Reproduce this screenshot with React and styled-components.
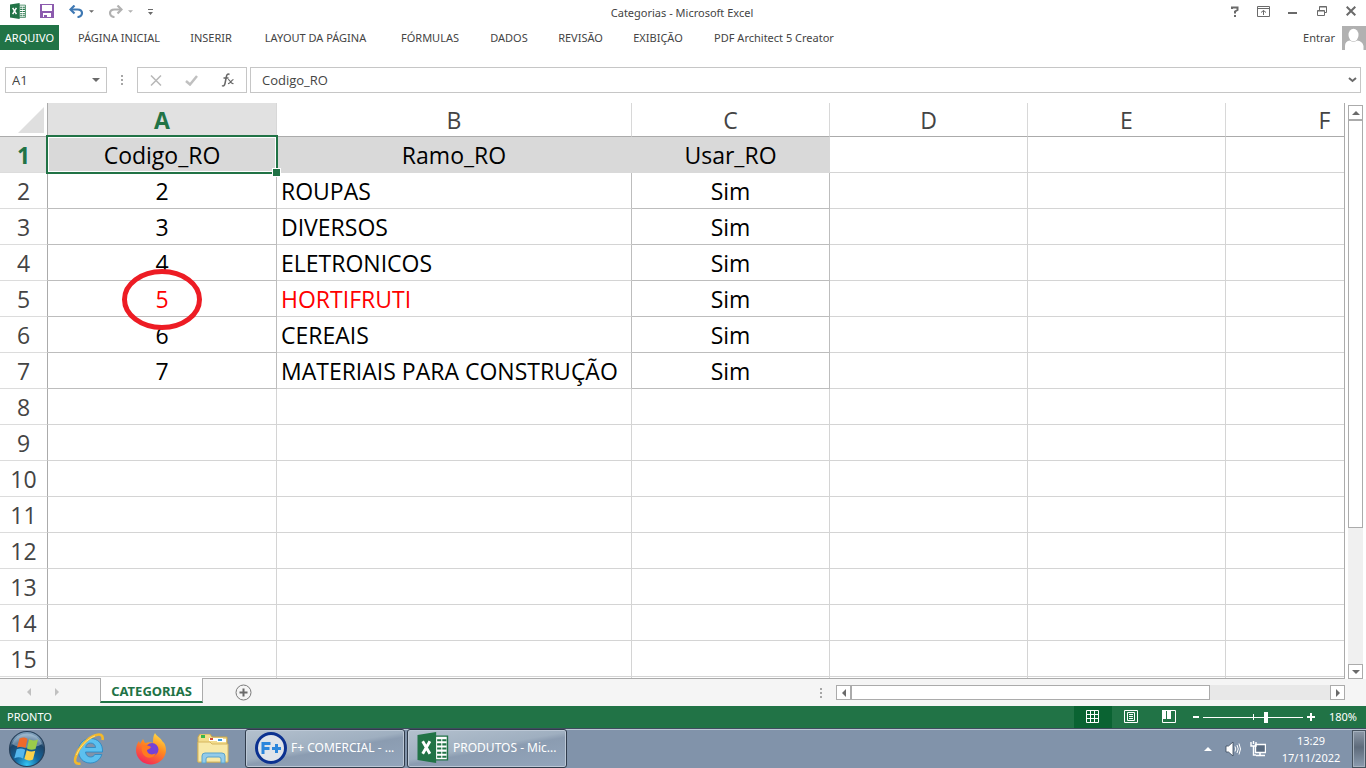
import styled, { createGlobalStyle, css } from "styled-components";

const GlobalStyle = createGlobalStyle`
  * {
    box-sizing: border-box;
  }
  body {
    margin: 0;
    background: #ffffff;
    color: #444444;
    font-family: "Noto Sans", "Open Sans", sans-serif;
    font-size: 11px;
  }
  button,
  input {
    margin: 0;
    padding: 0;
    border: 0;
    background: none;
    color: inherit;
    font: inherit;
  }
  svg {
    display: block;
    flex: none;
  }
`;

const Window = styled.div`
  display: flex;
  flex-direction: column;
  height: 100vh;
  overflow: hidden;
`;

const TitleBar = styled.header`
  display: grid;
  grid-template-columns: 1fr auto 1fr;
  align-items: center;
  flex: none;
  height: 25px;
`;

const QuickAccess = styled.div`
  display: flex;
  align-items: center;
  height: 22px;
  padding-left: 10px;
  align-self: start;
`;

const QuickButton = styled.button`
  display: flex;
  align-items: center;
  gap: 5px;
  margin-right: ${({ $gap }) => $gap}px;
`;

const Title = styled.div`
  padding-right: 2px;
  line-height: 16px;
`;

const WindowButtons = styled.div`
  display: flex;
  justify-content: flex-end;
  align-self: start;
  padding-right: 1px;
`;

const WindowButton = styled.button`
  display: flex;
  align-items: center;
  justify-content: center;
  width: 29px;
  height: 22px;
`;

const Ribbon = styled.nav`
  display: flex;
  flex: none;
  height: 25px;
`;

const RibbonTab = styled.button`
  width: ${({ $width }) => $width}px;
  line-height: 25px;
  white-space: nowrap;
`;

const FileTab = styled(RibbonTab)`
  margin-right: 3px;
  background: #217346;
  color: #ffffff;
`;

const SignIn = styled.button`
  display: flex;
  align-items: center;
  gap: 7px;
  margin-left: auto;
`;

const FormulaBar = styled.div`
  display: flex;
  align-items: center;
  flex: none;
  height: 26px;
  margin: 17px 5px 10px;
`;

const Box = styled.div`
  display: flex;
  align-items: center;
  height: 26px;
  border: 1px solid #c6c6c6;
`;

const NameBox = styled(Box)`
  width: 102px;
  padding: 0 6px;
`;

const EditButtons = styled(Box)`
  justify-content: space-between;
  width: 110px;
  padding: 0 11px 0 12px;
  margin-right: 3px;
`;

const FormulaBox = styled(Box)`
  flex: 1;
  padding: 0 3px 0 11px;
`;

const TextInput = styled.input`
  flex: 1;
  min-width: 0;
  font-family: "Open Sans", sans-serif;
  font-size: 13px;
  outline: none;
`;

const Dots = styled.div`
  display: flex;
  flex-direction: column;
  align-items: center;
  justify-content: center;
  gap: 2px;
  width: 30px;

  span {
    width: 2px;
    height: 2px;
    background: #a6a6a6;
  }
`;

const SheetArea = styled.main`
  display: flex;
  flex: 1;
  min-height: 0;
  padding-right: 3px;
`;

const SheetView = styled.div`
  flex: 1;
  min-width: 0;
  overflow: hidden;
  border-right: 1px solid #ababab;
  border-bottom: 1px solid #ababab;
`;

const Sheet = styled.table`
  width: 1424px;
  table-layout: fixed;
  border-collapse: separate;
  border-spacing: 0;
  font-family: "Open Sans", sans-serif;
  font-size: 23px;
  line-height: 30px;
`;

const HeadCell = styled.th`
  height: 34px;
  padding: 0;
  border-right: 1px solid #d8d8d8;
  border-bottom: 1px solid #ababab;
  font-weight: 400;

  ${({ $active }) =>
    $active &&
    css`
      background: #e1e1e1;
      color: #217346;
      font-weight: 700;
    `}
`;

const Corner = styled.td`
  height: 34px;
  padding: 0 3px 3px 0;
  border-right: 1px solid #ababab;
  border-bottom: 1px solid #ababab;
  vertical-align: bottom;

  svg {
    margin-left: auto;
  }
`;

const RowHead = styled.th`
  height: ${({ $short }) => ($short ? 6 : 36)}px;
  padding: 0;
  border-right: 1px solid #ababab;
  border-bottom: 1px solid #dcdcdc;
  font-weight: 400;

  ${({ $active }) =>
    $active &&
    css`
      background: #e1e1e1;
      color: #217346;
      font-weight: 700;
    `}
`;

const Cell = styled.td`
  position: relative;
  padding: 0 0 0 ${({ $left }) => ($left ? 4 : 0)}px;
  border-right: 1px solid ${({ $used }) => ($used ? "#bdbdbd" : "#d4d4d4")};
  border-bottom: 1px solid ${({ $used, $left }) => ($used && !$left ? "#bdbdbd" : "#d4d4d4")};
  color: ${({ $red }) => ($red ? "#ff0000" : "#000000")};
  text-align: ${({ $left }) => ($left ? "left" : "center")};
  white-space: nowrap;

  ${({ $title }) =>
    $title &&
    css`
      background: #d9d9d9;
      border-color: #d9d9d9;
    `}
`;

const Selection = styled.div`
  position: absolute;
  inset: -2px;
  border: 2px solid #217346;
  box-shadow: inset 0 0 0 1px #ffffff;
  z-index: 1;

  &::after {
    content: "";
    position: absolute;
    right: -5px;
    bottom: -5px;
    width: 7px;
    height: 7px;
    border: 1px solid #ffffff;
    background: #217346;
  }
`;

const RedMark = styled.svg`
  position: absolute;
  top: -12px;
  left: 74px;
  z-index: 1;
`;

const VerticalScroll = styled.div`
  display: flex;
  flex-direction: column;
  width: 15px;
  margin: 2px 0 0 3px;
  background: #f0f0f0;
`;

const ScrollButton = styled.button`
  display: flex;
  align-items: center;
  justify-content: center;
  flex: none;
  width: 15px;
  height: 15px;
  border: 1px solid #ababab;
  background: #ffffff;
`;

const VerticalThumb = styled.div`
  height: 75%;
  border: 1px solid #ababab;
  background: #ffffff;
`;

const SheetTabs = styled.div`
  display: flex;
  flex: none;
  height: 27px;
  padding-right: 21px;
  background: #f5f5f5;
`;

const TabArrows = styled.div`
  display: flex;
  align-items: center;
  gap: 20px;
  width: 100px;
  padding: 0 0 2px 25px;
`;

const SheetTab = styled.button`
  width: 103px;
  height: 25px;
  margin-top: -1px;
  padding-top: 2px;
  border: 1px solid #ababab;
  border-top: 0;
  border-bottom: 2px solid #217346;
  background: #ffffff;
  color: #217346;
  font-size: 13px;
  font-weight: 700;
`;

const AddSheet = styled.button`
  margin-left: 32px;
`;

const HorizontalScroll = styled.div`
  display: flex;
  width: 509px;
  height: 15px;
  margin-top: 6px;
  background: #e8e8e8;
`;

const HorizontalThumb = styled.div`
  width: 359px;
  border: 1px solid #ababab;
  background: #ffffff;
`;

const Spacer = styled.div`
  flex: 1;
`;

const StatusBar = styled.footer`
  display: flex;
  align-items: center;
  flex: none;
  height: 22px;
  padding: 0 9px 0 7px;
  background: #217346;
  color: #ffffff;
`;

const StatusText = styled.span`
  padding-bottom: 2px;
`;

const ViewButton = styled.button`
  display: flex;
  align-items: center;
  justify-content: center;
  width: 38px;
  height: 22px;
  padding: 0 1px 1px 0;
  background: ${({ $active }) => ($active ? "#0a6332" : "none")};
`;

const ZoomButton = styled.button`
  display: flex;
  justify-content: center;
  width: 15px;
`;

const ZoomSlider = styled.input`
  appearance: none;
  width: 100px;
  height: 12px;
  background:
    linear-gradient(#ffffff, #ffffff) 50% 50% / 1px 6px no-repeat,
    linear-gradient(#ffffff, #ffffff) 0 50% / 100% 1px no-repeat;

  &::-webkit-slider-thumb {
    appearance: none;
    width: 4px;
    height: 11px;
    background: #ffffff;
  }
`;

const ZoomValue = styled(StatusText)`
  width: 39px;
  text-align: right;
`;

const Taskbar = styled.div`
  display: flex;
  align-items: center;
  flex: none;
  height: 40px;
  border-top: 1px solid #3f4c5e;
  background: #8193aa;
  box-shadow: inset 0 1px 0 #bac7d4;
  color: #ffffff;
`;

const StartButton = styled.button`
  display: flex;
  justify-content: center;
  width: 54px;
  margin-right: 4px;
`;

const Pinned = styled.button`
  display: flex;
  justify-content: center;
  width: 62px;
`;

const TaskButton = styled.button`
  display: flex;
  align-items: center;
  gap: 4px;
  width: 160px;
  height: 39px;
  margin: 0 1px;
  padding: 0 0 2px 9px;
  border: 1px solid #303c4c;
  border-radius: 3px;
  background: linear-gradient(170deg, #b4c1ce 0%, #9fafc0 46%, #8b9cb1 54%, #93a5bb 100%);
  box-shadow: inset 0 0 0 1px #bcc8d6;
  font-size: 12px;
  white-space: nowrap;
`;

const TrayButton = styled.button`
  display: flex;
  justify-content: center;
  width: 25px;
`;

const Clock = styled.time`
  width: 82px;
  line-height: 17px;
  text-align: center;
`;

const ShowDesktop = styled.button`
  width: 14px;
  height: 38px;
  border: 1px solid #46535f;
  background: linear-gradient(#8d99a8, #5e6b7b 45%, #8b9bae);
  box-shadow: inset 0 0 0 1px #a5b1be;
`;

const tabs = [
  { label: "PÁGINA INICIAL", width: 114 },
  { label: "INSERIR", width: 70 },
  { label: "LAYOUT DA PÁGINA", width: 139 },
  { label: "FÓRMULAS", width: 90 },
  { label: "DADOS", width: 68 },
  { label: "REVISÃO", width: 75 },
  { label: "EXIBIÇÃO", width: 80 },
  { label: "PDF Architect 5 Creator", width: 152 },
];

const columns = [
  { name: "A", width: 229 },
  { name: "B", width: 355 },
  { name: "C", width: 198 },
  { name: "D", width: 198 },
  { name: "E", width: 198 },
  { name: "F", width: 198 },
];

const data = [
  ["Codigo_RO", "Ramo_RO", "Usar_RO"],
  ["2", "ROUPAS", "Sim"],
  ["3", "DIVERSOS", "Sim"],
  ["4", "ELETRONICOS", "Sim"],
  ["5", "HORTIFRUTI", "Sim"],
  ["6", "CEREAIS", "Sim"],
  ["7", "MATERIAIS PARA CONSTRUÇÃO", "Sim"],
];

const rows = Array.from({ length: 15 }, (_, i) => data[i] || []);

function Arrow({ dir = "down", color = "#6a6a6a", size = 8 }) {
  const d = {
    down: "M0 2h8L4 6z",
    up: "M0 6h8L4 2z",
    left: "M6 0v8L2 4z",
    right: "M2 0v8l4-4z",
  }[dir];
  return (
    <svg width={size} height={size} viewBox="0 0 8 8">
      <path d={d} fill={color} />
    </svg>
  );
}

function ExcelIcon({ width, height }) {
  return (
    <svg width={width} height={height} viewBox="0 0 30 30">
      <path d="M17 4h12v23H17z" fill="#fff" stroke="#217346" strokeWidth="1.4" />
      <path
        d="M19 7h4v2h-4zM24 7h4v2h-4zM19 11h4v2h-4zM24 11h4v2h-4zM19 15h4v2h-4zM24 15h4v2h-4zM19 19h4v2h-4zM24 19h4v2h-4zM19 23h4v2h-4zM24 23h4v2h-4z"
        fill="#217346"
      />
      <path d="M0 3 18 0v30L0 27z" fill="#217346" />
      <path d="m5 9 7 12M12 9 5 21" stroke="#fff" strokeWidth="2.8" />
    </svg>
  );
}

function SaveIcon() {
  return (
    <svg width="14" height="14" viewBox="0 0 14 14">
      <path d="M0 0h14v14H0z" fill="#8c5bae" />
      <path d="M2 1h10v6H2zM3 9h8v4H3z" fill="#fff" />
      <path d="M4 11h3v2H4z" fill="#8c5bae" />
    </svg>
  );
}

function UndoIcon({ redo }) {
  return (
    <svg width="15" height="13" viewBox="0 0 15 13">
      <g
        transform={redo ? "matrix(-1 0 0 1 15 0)" : undefined}
        fill="none"
        stroke={redo ? "#b1b1b1" : "#3e78b3"}
        strokeWidth="2.2"
      >
        <path d="M5.5 0.5 1.5 4.5l4 4" />
        <path d="M2 4.5h6.500c3 0 4.500 1.500 4.500 3.600S11 12 8.500 12" />
      </g>
    </svg>
  );
}

function WindowsLogo() {
  return (
    <svg width="38" height="38" viewBox="0 0 38 38">
      <defs>
        <radialGradient id="orb" cx="50%" cy="95%" r="85%">
          <stop offset="0" stopColor="#35c6f4" />
          <stop offset="0.4" stopColor="#14679f" />
          <stop offset="0.8" stopColor="#1c4468" />
          <stop offset="1" stopColor="#7b9cb8" />
        </radialGradient>
      </defs>
      <circle cx="19" cy="19" r="17.500" fill="url(#orb)" stroke="#28415b" strokeWidth="1.200" />
      <path d="M4 14a16 16 0 0 1 30 0c-8 5-22 5-30 0z" fill="#bfd2e2" opacity="0.45" />
      <path d="M11.500 8.500c3-1.600 5-1.400 8 .2L17.500 18c-3-1.500-5-1.700-8.500-.4z" fill="#ee6a2b" />
      <path d="M21 9.300c3 1.500 5.500 1.500 9 .2L27.500 19c-3 1.200-5.500 1-8.500-.5z" fill="#9bcb4b" />
      <path d="M8.700 19.300c3-1.300 5.500-1.100 8.500.4L15 28.500c-3-1.600-5-1.700-8.700-.3z" fill="#55b7ec" />
      <path d="M18.700 20.300c3 1.500 5.500 1.700 8.500.5L25 29.500c-3 1.300-5.500 1.200-8.600-.4z" fill="#fcd24b" />
    </svg>
  );
}

function ExplorerIcon() {
  return (
    <svg width="32" height="32" viewBox="0 0 32 32">
      <path
        fillRule="evenodd"
        d="M29.500 19H12.500c.3 3.300 2.500 5 5 5 2.300 0 3.600-1 4.300-2.500h7c-1.600 5.200-6 8.500-11.600 8.500C10.500 30 5.500 25 5.500 18S10.500 5.500 17.500 5.500c7.500 0 12.500 5.500 12 13.500zM12.600 14.500h10c-.4-3-2.300-4.500-5-4.500s-4.600 1.600-5 4.500z"
        fill="#5cc0ef"
        stroke="#2586c4"
        strokeWidth="0.8"
      />
      <path
        d="M7.500 30.500C2 31.500 1 28.500 3 23 6 14 14.500 4.800 22.500 2.200 27 .8 30.500 1.500 29.500 7"
        fill="none"
        stroke="#f3b92b"
        strokeWidth="2.600"
      />
      <path d="M3.500 22C7 13.500 14 6 22 3" fill="none" stroke="#fde38a" strokeWidth="0.900" />
    </svg>
  );
}

function FirefoxIcon() {
  return (
    <svg width="32" height="32" viewBox="0 0 32 32">
      <defs>
        <linearGradient id="fox" x1="0.8" y1="0" x2="0.3" y2="1">
          <stop offset="0" stopColor="#ffe14a" />
          <stop offset="0.45" stopColor="#ff8a1e" />
          <stop offset="1" stopColor="#f5255a" />
        </linearGradient>
      </defs>
      <path
        d="M20 0c1 3 6 5 7.500 8.500C30 10 31 14 31 17c0 8-7 14.500-15 14.500S1 25.500 1 17c0-4 1.500-7 3-9l1 3 3-5 2 4c4-1 6-1 8 0 0-4 0-7 2-10z"
        fill="url(#fox)"
      />
      <circle cx="17" cy="16.500" r="6.500" fill="#7542d8" />
      <path d="M7 13c4-2 8 0 9 1-1 2-3 2-4 3 0 4 5 6 9 3-2 6-10 6-13 1-1-2-2-5-1-8z" fill="#ff7a20" />
    </svg>
  );
}

function FolderIcon() {
  return (
    <svg width="34" height="30" viewBox="0 0 34 30">
      <path d="M2 3 4 0h10l2 3h15v25H2z" fill="#f2dc8c" stroke="#c9a64b" />
      <path d="M5 1h4v3H5z" fill="#38b54a" />
      <path d="M13 4h14v3H13z" fill="#fff" />
      <path d="M14 4h3v2h-3z" fill="#d24a3a" />
      <path d="M21 5h9v3h-9z" fill="#fff" />
      <path d="M22 5h4v2h-4z" fill="#3a9bdc" />
      <path d="M2 8h12l2 2h16v18H2z" fill="#f8e9a8" stroke="#d6b65e" />
      <path
        d="M6 29v-7q0-3 3-3h17q3 0 3 3v7h-4v-4q0-2-2-2H12q-2 0-2 2v4z"
        fill="#93cbea"
        stroke="#5aa3cc"
      />
    </svg>
  );
}

export default function App() {
  return (
    <Window>
      <GlobalStyle />
      <TitleBar>
        <QuickAccess>
          <QuickButton $gap={14} aria-label="Excel">
            <ExcelIcon width={16} height={16} />
          </QuickButton>
          <QuickButton $gap={15} aria-label="Salvar">
            <SaveIcon />
          </QuickButton>
          <QuickButton $gap={14} aria-label="Desfazer">
            <UndoIcon />
            <Arrow size={5} />
          </QuickButton>
          <QuickButton $gap={15} aria-label="Refazer">
            <UndoIcon redo />
            <Arrow size={5} color="#b1b1b1" />
          </QuickButton>
          <QuickButton $gap={0} aria-label="Personalizar">
            <svg width="5" height="7" viewBox="0 0 5 7">
              <path d="M0 1h5v1H0zM0 4h5L2.500 7z" fill="#6a6a6a" />
            </svg>
          </QuickButton>
        </QuickAccess>
        <Title>Categorias - Microsoft Excel</Title>
        <WindowButtons>
          <WindowButton aria-label="Ajuda">
            <svg width="8" height="11" viewBox="0 0 8 11">
              <path d="M1 3V1.500h5.500V4L4 5.500V7.500M4 9v2" fill="none" stroke="#6a6a6a" strokeWidth="2" />
            </svg>
          </WindowButton>
          <WindowButton aria-label="Opções de exibição">
            <svg width="13" height="11" viewBox="0 0 13 11" fill="none" stroke="#6a6a6a">
              <path d="M.5.5h12v10H.5zM.5 2.500h12M6.500 9V4.500M4 6.500l2.500-2 2.500 2" />
            </svg>
          </WindowButton>
          <WindowButton aria-label="Minimizar">
            <svg width="9" height="10" viewBox="0 0 9 10">
              <path d="M0 6h9v2H0z" fill="#6a6a6a" />
            </svg>
          </WindowButton>
          <WindowButton aria-label="Restaurar">
            <svg width="10" height="10" viewBox="0 0 10 10" fill="none" stroke="#6a6a6a">
              <path d="M.5 4.500h7v5h-7zM.5 5h7M2.500 4V.5h7v6H8M2.500 1h7" />
            </svg>
          </WindowButton>
          <WindowButton aria-label="Fechar">
            <svg width="10" height="10" viewBox="0 0 10 10" stroke="#6a6a6a" strokeWidth="2">
              <path d="m.7.700 8.600 8.600M9.300.700.7 9.300" />
            </svg>
          </WindowButton>
        </WindowButtons>
      </TitleBar>

      <Ribbon>
        <FileTab $width={59}>ARQUIVO</FileTab>
        {tabs.map((tab) => (
          <RibbonTab key={tab.label} $width={tab.width}>
            {tab.label}
          </RibbonTab>
        ))}
        <SignIn>
          Entrar
          <svg width="24" height="24" viewBox="0 0 24 24">
            <path d="M0 0h24v24H0z" fill="#b1b1b1" />
            <ellipse cx="11.500" cy="9" rx="5" ry="6.300" fill="#fff" />
            <path d="M3 24v-4q0-5 5-5.500 3.500 2.500 7 0 5.500.5 6.500 5.500v4z" fill="#fff" />
          </svg>
        </SignIn>
      </Ribbon>

      <FormulaBar>
        <NameBox>
          <TextInput aria-label="Caixa de nome" defaultValue="A1" />
          <button aria-label="Abrir lista">
            <Arrow />
          </button>
        </NameBox>
        <Dots>
          <span />
          <span />
          <span />
        </Dots>
        <EditButtons>
          <button aria-label="Cancelar">
            <svg width="12" height="11" viewBox="0 0 12 11" stroke="#b8b8b8" strokeWidth="1.500">
              <path d="m1 .5 10 10M11 .5 1 10.500" />
            </svg>
          </button>
          <button aria-label="Inserir">
            <svg width="13" height="11" viewBox="0 0 13 11" fill="none" stroke="#c0c0c0" strokeWidth="2.500">
              <path d="m1 6 4 3.500L12 1" />
            </svg>
          </button>
          <button aria-label="Inserir função">
            <svg width="14" height="14" viewBox="0 0 14 14" fill="none" stroke="#666">
              <path d="M8.500 1.500C6.500.3 5.700 2 5.300 4L4 10.500c-.4 2-1.500 3-3 2M2.500 5h5" strokeWidth="1.500" />
              <path d="M7 6.500c2-.5 2.500 5 5.500 4M12.500 6.500c-2 0-3 4.500-5.500 4" strokeWidth="1.200" />
            </svg>
          </button>
        </EditButtons>
        <FormulaBox>
          <TextInput aria-label="Barra de fórmulas" defaultValue="Codigo_RO" />
          <button aria-label="Expandir">
            <svg width="9" height="6" viewBox="0 0 9 6" fill="none" stroke="#6a6a6a" strokeWidth="2">
              <path d="m1 1 3.500 3L8 1" />
            </svg>
          </button>
        </FormulaBox>
      </FormulaBar>

      <SheetArea>
        <SheetView>
          <Sheet>
            <colgroup>
              <col width="48" />
              {columns.map((col) => (
                <col key={col.name} width={col.width} />
              ))}
            </colgroup>
            <thead>
              <tr>
                <Corner>
                  <svg width="26" height="26" viewBox="0 0 26 26">
                    <path d="M26 0v26H0z" fill="#dfdfdf" />
                  </svg>
                </Corner>
                {columns.map((col, i) => (
                  <HeadCell key={col.name} scope="col" $active={i === 0}>
                    {col.name}
                  </HeadCell>
                ))}
              </tr>
            </thead>
            <tbody>
              {rows.map((row, r) => (
                <tr key={r}>
                  <RowHead scope="row" $active={r === 0}>
                    {r + 1}
                  </RowHead>
                  {columns.map((col, c) => (
                    <Cell
                      key={col.name}
                      $used={Boolean(row[c])}
                      $title={r === 0 && c < 3}
                      $left={r > 0 && c === 1}
                      $red={r === 4 && c < 2}
                    >
                      {row[c]}
                      {r === 0 && c === 0 && <Selection />}
                      {r === 4 && c === 0 && (
                        <RedMark width="80" height="61" viewBox="0 0 80 61">
                          <ellipse cx="40" cy="30.500" rx="37.500" ry="28" fill="none" stroke="#ed1c24" strokeWidth="5" />
                        </RedMark>
                      )}
                    </Cell>
                  ))}
                </tr>
              ))}
              <tr>
                <RowHead $short />
                {columns.map((col) => (
                  <Cell key={col.name} />
                ))}
              </tr>
            </tbody>
          </Sheet>
        </SheetView>
        <VerticalScroll>
          <ScrollButton aria-label="Rolar para cima">
            <Arrow dir="up" />
          </ScrollButton>
          <Spacer>
            <VerticalThumb />
          </Spacer>
          <ScrollButton aria-label="Rolar para baixo">
            <Arrow />
          </ScrollButton>
        </VerticalScroll>
      </SheetArea>

      <SheetTabs>
        <TabArrows>
          <Arrow dir="left" color="#c0c0c0" />
          <Arrow dir="right" color="#c0c0c0" />
        </TabArrows>
        <SheetTab>CATEGORIAS</SheetTab>
        <AddSheet aria-label="Nova planilha">
          <svg width="17" height="17" viewBox="0 0 17 17" fill="none" stroke="#7a7a7a">
            <circle cx="8.500" cy="8.500" r="7.500" />
            <path d="M8.500 4.500v8M4.500 8.500h8" strokeWidth="2" stroke="#6a6a6a" />
          </svg>
        </AddSheet>
        <Spacer />
        <Dots>
          <span />
          <span />
          <span />
        </Dots>
        <HorizontalScroll>
          <ScrollButton aria-label="Rolar para a esquerda">
            <Arrow dir="left" />
          </ScrollButton>
          <HorizontalThumb />
          <Spacer />
          <ScrollButton aria-label="Rolar para a direita">
            <Arrow dir="right" />
          </ScrollButton>
        </HorizontalScroll>
      </SheetTabs>

      <StatusBar>
        <StatusText>PRONTO</StatusText>
        <Spacer />
        <ViewButton $active aria-label="Normal">
          <svg width="13" height="13" viewBox="0 0 13 13" fill="none" stroke="#fff">
            <path d="M.5.5h12v12H.5zM4.500 0v13M8.500 0v13M0 4.500h13M0 8.500h13" />
          </svg>
        </ViewButton>
        <ViewButton aria-label="Layout da página">
          <svg width="14" height="13" viewBox="0 0 14 13" fill="none" stroke="#fff">
            <path d="M.5.5h13v12H.5zM3.500 2.500h7v8h-7zM5 4.500h4M5 6.500h4M5 8.500h4" />
          </svg>
        </ViewButton>
        <ViewButton aria-label="Quebra de página">
          <svg width="14" height="13" viewBox="0 0 14 13">
            <path d="M.5.5h13v12H.5z" fill="none" stroke="#fff" />
            <path d="M0 0h4v9H0zM5 0h4v9H5z" fill="#fff" />
          </svg>
        </ViewButton>
        <ZoomButton aria-label="Reduzir">
          <svg width="6" height="8" viewBox="0 0 6 8">
            <path d="M0 3h6v2H0z" fill="#fff" />
          </svg>
        </ZoomButton>
        <ZoomSlider type="range" aria-label="Zoom" min="0" max="100" defaultValue="64" />
        <ZoomButton aria-label="Ampliar">
          <svg width="8" height="8" viewBox="0 0 8 8">
            <path d="M0 3h3V0h2v3h3v2H5v3H3V5H0z" fill="#fff" />
          </svg>
        </ZoomButton>
        <ZoomValue>180%</ZoomValue>
      </StatusBar>

      <Taskbar>
        <StartButton aria-label="Iniciar">
          <WindowsLogo />
        </StartButton>
        <Pinned aria-label="Internet Explorer">
          <ExplorerIcon />
        </Pinned>
        <Pinned aria-label="Firefox">
          <FirefoxIcon />
        </Pinned>
        <Pinned aria-label="Explorador de arquivos">
          <FolderIcon />
        </Pinned>
        <TaskButton>
          <svg width="32" height="32" viewBox="0 0 32 32">
            <circle cx="16" cy="16" r="14.500" fill="#dfe4ea" stroke="#0b3190" strokeWidth="3" />
            <path d="M8 22V11.500h7.500M8 16.500h6.500M17 16.500h9M21.500 12v9" fill="none" stroke="#2b86dc" strokeWidth="3" />
          </svg>
          F+ COMERCIAL - ...
        </TaskButton>
        <TaskButton>
          <ExcelIcon width={32} height={31} />
          PRODUTOS - Mic...
        </TaskButton>
        <Spacer />
        <TrayButton aria-label="Mostrar ícones ocultos">
          <Arrow dir="up" color="#ffffff" />
        </TrayButton>
        <TrayButton aria-label="Volume">
          <svg width="16" height="16" viewBox="0 0 16 16">
            <path d="M1 5h2.500L8 1v14l-4.500-4H1z" fill="#fff" stroke="#38475a" strokeWidth="0.800" />
            <path d="M10 5.500q1.500 2.500 0 5M12 4q2.500 4 0 8M14 2.500q3 5.500 0 11" fill="none" stroke="#fff" />
          </svg>
        </TrayButton>
        <TrayButton aria-label="Rede">
          <svg width="16" height="16" viewBox="0 0 16 16">
            <path d="M5.500 3.500h10v8h-10z" fill="#5a6b80" stroke="#fff" strokeWidth="1.400" />
            <path d="M10 12v2M6 14.500h9" stroke="#fff" strokeWidth="1.600" />
            <path d="M1 1v4h5V1M3.500 0v3M3.500 5v9H6" fill="none" stroke="#fff" strokeWidth="1.400" />
          </svg>
        </TrayButton>
        <Clock>
          13:29
          <br />
          17/11/2022
        </Clock>
        <ShowDesktop aria-label="Mostrar área de trabalho" />
      </Taskbar>
    </Window>
  );
}
